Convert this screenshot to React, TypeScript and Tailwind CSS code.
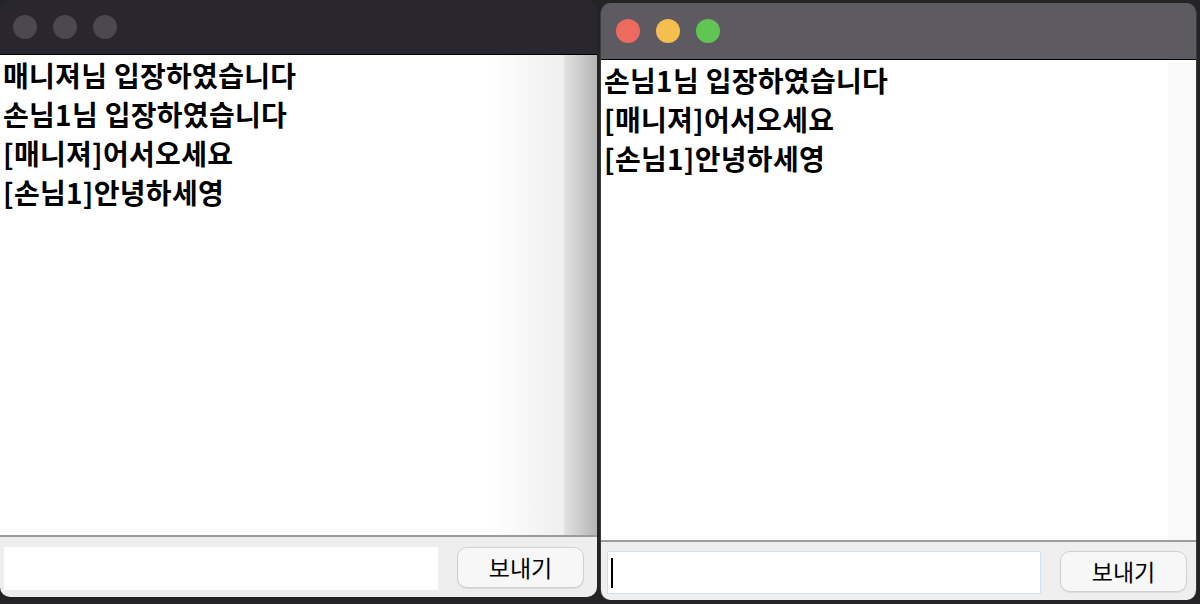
const font = { fontFamily: '"Noto Sans CJK KR", "Noto Sans", sans-serif' };

type WinProps = {
  active: boolean;
  lines: string[];
};

function ChatWindow({ active, lines }: WinProps) {
  return (
    <div
      className={
        "flex w-[597px] flex-col overflow-hidden rounded-[10px] " +
        (active ? "mt-[3px] h-[597px] border-x border-[#3a3a3a]" : "h-[597px]")
      }
    >
      {/* title bar */}
      <div
        className={
          "flex shrink-0 items-center gap-4 border-b border-black " +
          (active ? "h-[57px] bg-[#5e5a62] pl-[15px]" : "h-[55px] bg-[#2a2630] pl-[13px]")
        }
      >
        <span className={"h-6 w-6 rounded-full " + (active ? "bg-[#ed6a5e]" : "bg-[#4b4851]")} />
        <span className={"h-6 w-6 rounded-full " + (active ? "bg-[#f5bf4f]" : "bg-[#4b4851]")} />
        <span className={"h-6 w-6 rounded-full " + (active ? "bg-[#61c554]" : "bg-[#4b4851]")} />
      </div>

      {/* messages */}
      <div
        className={
          "flex flex-1 border-b-2 border-[#9c9c9c] " +
          (active
            ? "bg-white"
            : "bg-[linear-gradient(to_right,#ffffff_82%,#efefef_94.4%,#e2e2e2_94.5%,#b4b4b4)]")
        }
      >
        <div
          className="flex-1 pt-[1px] pl-[3px] text-[28px] font-bold leading-[39px] tracking-[0.3px] text-black"
          style={font}
        >
          {lines.map((l, i) => (
            <div key={i}>{l}</div>
          ))}
        </div>
        {active && <div className="mt-[3px] w-[28px] bg-[#f9f9f9]" />}
      </div>

      {/* input row */}
      <div
        className={
          "flex shrink-0 items-start " +
          (active ? "h-[58px] bg-[#efefef] pt-[9px] pl-[6px]" : "h-[60px] bg-[#eeeeee] pt-[10px] pl-1")
        }
      >
        <div
          className={
            "flex h-[43px] w-[434px] items-center bg-white " +
            (active ? "border border-[#cfe0ee] pl-[3px]" : "")
          }
        >
          {active && <span className="h-[30px] w-[2px] bg-black" />}
        </div>
        <button
          className="ml-[19px] h-[41px] w-[127px] rounded-[10px] border border-[#d0d0d0] bg-[#f7f7f7] text-[23px] text-black shadow-[0_1px_1px_rgba(0,0,0,0.08)]"
          style={font}
        >
          보내기
        </button>
      </div>
    </div>
  );
}

export default function App() {
  return (
    <div className="flex h-[604px] w-[1200px] gap-[3px] overflow-hidden bg-[#242427]">
      <ChatWindow
        active={false}
        lines={["매니져님 입장하였습니다", "손님1님 입장하였습니다", "[매니져]어서오세요", "[손님1]안녕하세영"]}
      />
      <ChatWindow active lines={["손님1님 입장하였습니다", "[매니져]어서오세요", "[손님1]안녕하세영"]} />
    </div>
  );
}
